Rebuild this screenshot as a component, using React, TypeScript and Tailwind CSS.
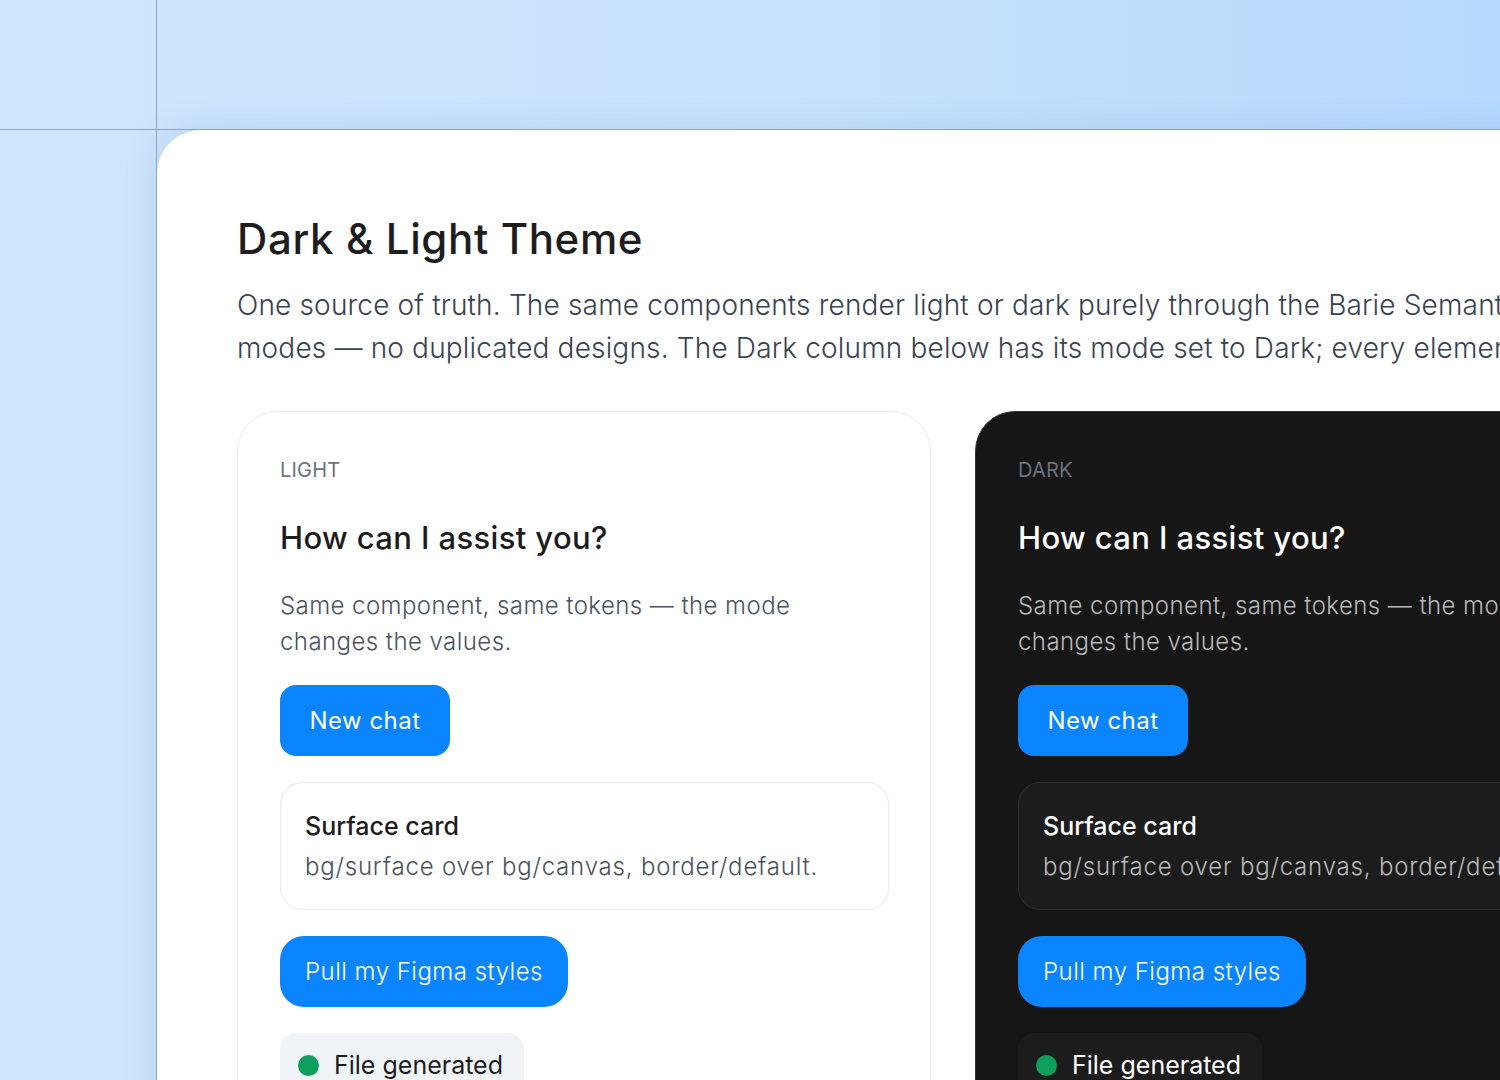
import React from "react";

const FONT = { fontFamily: "Inter, 'Noto Sans', sans-serif" };

function Panel({ dark }: { dark: boolean }) {
  return (
    <div
      className={
        dark
          ? "w-[694px] shrink-0 h-[720px] rounded-[40px] border border-[#353535] bg-[#161616] px-[42px] pt-[44px]"
          : "w-[694px] shrink-0 h-[720px] rounded-[40px] border border-[#e8eaed] bg-white px-[42px] pt-[44px]"
      }
    >
      <div className="text-[20px] leading-[28px] font-normal text-[#6b7280] tracking-[0.01em]">
        {dark ? "DARK" : "LIGHT"}
      </div>
      <h2
        className={
          dark
            ? "mt-[34px] text-[31px] leading-[40px] font-medium tracking-[0.012em] text-white"
            : "mt-[34px] text-[31px] leading-[40px] font-medium tracking-[0.012em] text-[#1c1c1e]"
        }
      >
        How can I assist you?
      </h2>
      <p
        className={
          dark
            ? "mt-[30px] text-[24px] leading-[36px] font-light tracking-[0.018em] text-[#b9b9b9] whitespace-nowrap"
            : "mt-[30px] text-[24px] leading-[36px] font-light tracking-[0.018em] text-[#4a5260] whitespace-nowrap"
        }
      >
        Same component, same tokens — the mode
        <br />
        changes the values.
      </p>
      <button className="mt-[25px] flex h-[71px] w-[170px] items-center justify-center rounded-[16px] bg-[#0a84ff] text-[24px] font-normal tracking-[0.02em] text-white">
        New chat
      </button>
      <div
        className={
          dark
            ? "mt-[26px] h-[128px] w-[609px] rounded-[22px] border border-[#2e2e2e] bg-[#1c1c1c] px-[24px] pt-[27px]"
            : "mt-[26px] h-[128px] w-[609px] rounded-[22px] border border-[#e6e8eb] bg-white px-[24px] pt-[27px]"
        }
      >
        <div
          className={
            dark
              ? "text-[25px] leading-[32px] font-medium text-white"
              : "text-[25px] leading-[32px] font-medium text-[#1c1c1e]"
          }
        >
          Surface card
        </div>
        <div
          className={
            dark
              ? "mt-[9px] text-[24px] leading-[32px] font-light tracking-[0.034em] text-[#b9b9b9] whitespace-nowrap"
              : "mt-[9px] text-[24px] leading-[32px] font-light tracking-[0.034em] text-[#4a5260] whitespace-nowrap"
          }
        >
          bg/surface over bg/canvas, border/default.
        </div>
      </div>
      <button className="mt-[26px] flex h-[71px] w-[288px] items-center justify-center rounded-[24px] bg-[#0a84ff] text-[24px] font-light tracking-[0.02em] text-white">
        Pull my Figma styles
      </button>
      <div
        className={
          dark
            ? "mt-[26px] flex h-[64px] w-[244px] items-center gap-[15px] rounded-[16px] bg-[#1c1c1c] pl-[18px]"
            : "mt-[26px] flex h-[64px] w-[244px] items-center gap-[15px] rounded-[16px] bg-[#f1f4f7] pl-[18px]"
        }
      >
        <span className="h-[21px] w-[21px] shrink-0 rounded-full bg-[#0e9f5c]" />
        <span
          className={
            dark
              ? "text-[25px] leading-[32px] font-normal text-white"
              : "text-[25px] leading-[32px] font-normal text-[#1c1c1e]"
          }
        >
          File generated
        </span>
      </div>
    </div>
  );
}

export default function App() {
  return (
    <div
      className="relative h-[1080px] w-[1500px] overflow-hidden bg-linear-to-r from-[#cfe5fb] via-[#c9e3fc] to-[#b6d9fd]"
      style={FONT}
    >
      <div className="pl-[157px] pt-[130px]">
        <div className="h-[1000px] w-[1500px] rounded-tl-[44px] bg-white pl-[80px] pt-[85px] shadow-[0_0_36px_rgba(40,100,170,0.14)]">
          <h1 className="text-[42px] leading-[48px] font-medium tracking-[0.015em] text-[#1d1d1f] whitespace-nowrap">
            Dark &amp; Light Theme
          </h1>
          <p className="mt-[21px] text-[28px] leading-[43px] font-light tracking-[0.006em] text-[#3a4251] whitespace-nowrap">
            One source of truth. The same components render light or dark purely through the Barie Semantic
            <br />
            modes — no duplicated designs. The Dark column below has its mode set to Dark; every element follows.
          </p>
          <div className="mt-[41px] flex gap-[44px]">
            <Panel dark={false} />
            <Panel dark={true} />
          </div>
        </div>
      </div>
      <div className="pointer-events-none absolute left-[156px] top-0 h-full w-px bg-[#8ba5bd]" />
      <div className="pointer-events-none absolute left-0 top-[129px] h-px w-full bg-[#8ba5bd]" />
    </div>
  );
}
